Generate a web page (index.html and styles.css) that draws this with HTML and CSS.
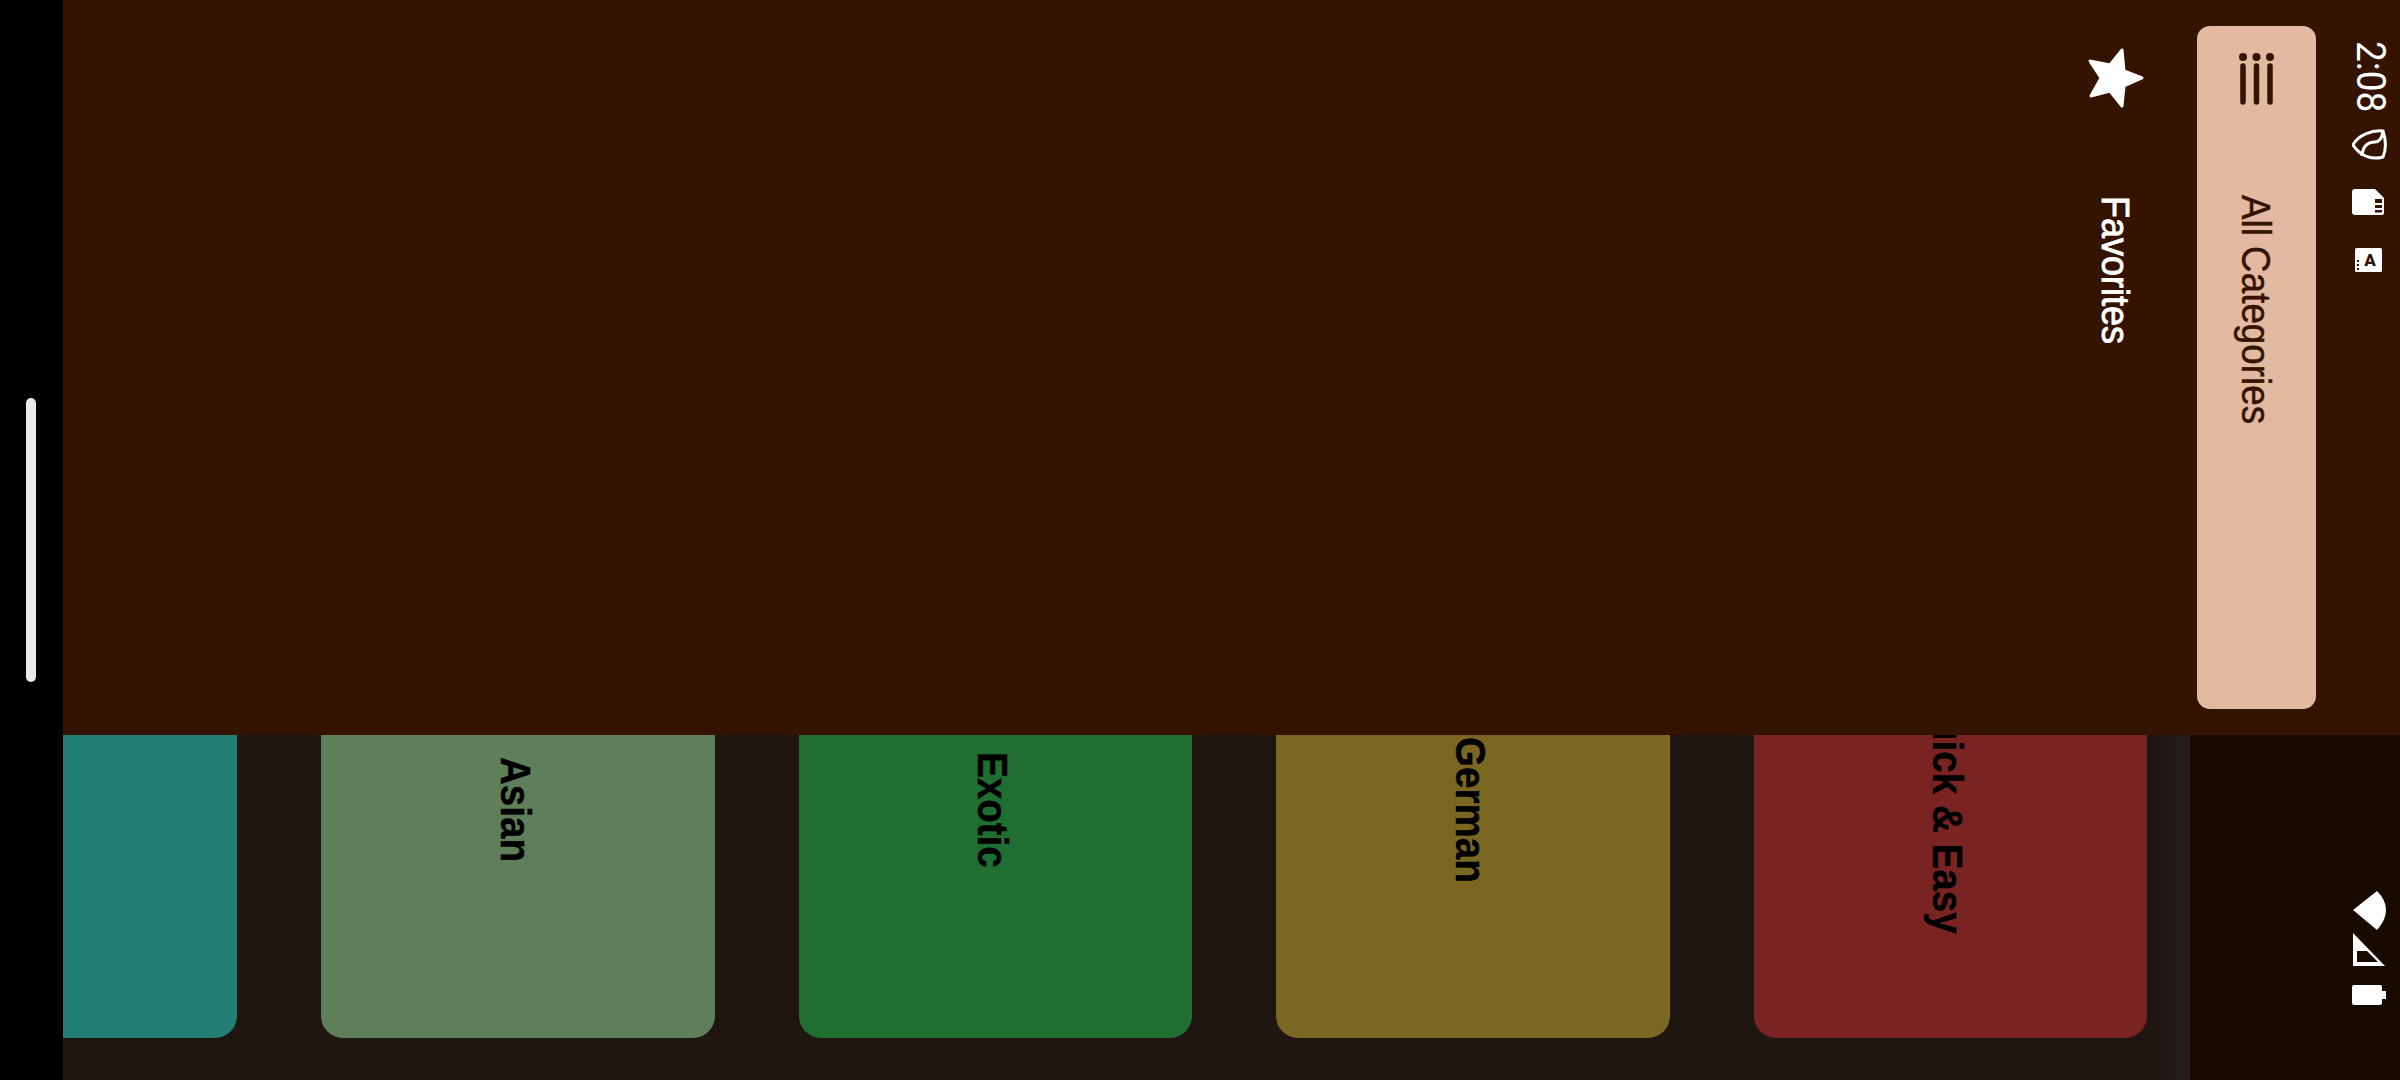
FILE: index.html
```html
<!DOCTYPE html>
<html lang="en">
<head>
<meta charset="utf-8">
<title>Categories</title>
<link rel="stylesheet" href="styles.css">
</head>
<body>
<div class="screen">
  <aside class="gesture"><div class="handle"></div></aside>
  <main class="content">
    <section class="top">
      <div class="tab">
        <svg class="tab-icon" width="64" height="66" viewBox="2084 45 64 66"><path class="star" d="M2122 50 L2124 71 L2142 78 L2124 86 L2122 106 L2110 91 L2091 96 L2101 78 L2090 61 L2110 65 Z"/></svg>
        <span class="tab-label fav">Favorites</span>
      </div>
      <div class="tab active">
        <svg class="tab-icon" width="64" height="66" viewBox="2225 45 64 66"><g class="menu-dots"><circle cx="2243" cy="57" r="4"/><circle cx="2256.5" cy="57" r="4"/><circle cx="2270" cy="57" r="4"/></g><g class="menu-bars"><path d="M2243 66V102M2256.5 66V102M2270 66V102"/></g></svg>
        <span class="tab-label cat">All Categories</span>
      </div>
      <div class="status-top">
        <span class="time">2:08</span>
        <svg class="ic-leaf" width="36" height="32" viewBox="2352 128 36 32"><path class="leaf" d="M2353 144C2358 134 2372 129 2383 130C2386 139 2386 149 2383 156C2373 159 2361 156 2353 144Z"/><path class="leaf" d="M2362 155C2363 143 2370 141 2375 141C2380 141 2382 137 2383 130"/></svg>
        <svg class="ic-sd" width="36" height="28" viewBox="2352 188 36 28"><path class="white" d="M2355 189H2375L2384 198V213Q2384 215 2382 215H2355Q2352 215 2352 212V192Q2352 189 2355 189Z"/><path class="hole" d="M2375 199H2382V203H2375ZM2375 205H2382V208H2375ZM2375 210H2382V212.500H2375Z"/></svg>
        <svg class="ic-a" width="36" height="28" viewBox="2352 246 36 28"><rect class="white" x="2355" y="248" width="27" height="24" rx="1.500"/><text class="a-letter" x="2370" y="266" text-anchor="middle">A</text><path class="hole" d="M2357 260h2v2h-2zM2357 264h2v2h-2zM2357 268h2v2h-2z"/></svg>
      </div>
    </section>
    <section class="bottom">
      <div class="band">
        <div class="cards">
          <div class="card teal"></div>
          <div class="card sage"><span>Asian</span></div>
          <div class="card green"><span>Exotic</span></div>
          <div class="card olive"><span>German</span></div>
          <div class="card red"><span>Quick &amp; Easy</span></div>
        </div>
      </div>
      <div class="panel">
        <svg width="36" height="40" viewBox="2352 891 36 40"><path class="white" d="M2353 910L2377 891Q2386 900 2386 910Q2386 920 2377 930Z"/></svg>
        <svg class="ic-signal" width="36" height="33" viewBox="2352 933 36 33"><path class="white" d="M2353 933L2385 966H2353Z"/><path class="hole" d="M2357 951H2367L2378 962H2357Z"/></svg>
        <svg class="ic-battery" width="36" height="20" viewBox="2352 985 36 20"><path class="white" d="M2354 985H2380Q2382 985 2382 987V991H2386V999H2382V1003Q2382 1005 2380 1005H2354Q2352 1005 2352 1003V987Q2352 985 2354 985Z"/></svg>
      </div>
    </section>
  </main>
</div>
</body>
</html>
```
FILE: styles.css
```css
* { box-sizing: border-box; }
html, body { margin: 0; padding: 0; }
body { width: 2400px; height: 1080px; overflow: hidden; background: #000; font-family: Roboto, "Liberation Sans", sans-serif; }
.screen { display: flex; width: 2400px; height: 1080px; }
.gesture { flex: 0 0 63px; display: flex; align-items: center; justify-content: center; padding-right: 1px; background: #000; }
.handle { width: 10px; height: 284px; border-radius: 5px; background: #ebebeb; }
.content { flex: 1; display: flex; flex-direction: column; min-width: 0; }

.top { height: 735px; background: #341300; display: flex; justify-content: flex-end; align-items: flex-start; padding-top: 26px; }
.tab { width: 119px; height: 683px; margin-right: 22px; border-radius: 13px; display: flex; flex-direction: column; align-items: center; padding-top: 19px; color: #fff; }
.tab.active { background: #e3b9a1; color: #341300; margin-right: 0; }
.tab-icon { flex: none; }
.tab-label { writing-mode: vertical-rl; font-family: "Liberation Sans", Arial, sans-serif; line-height: 44px; transform: scaleX(1.1); }
.cat { font-size: 36.800px; margin-top: 84px; margin-right: 4px; -webkit-text-stroke: 0.4px #341300; }
.fav { font-size: 36px; margin-top: 85px; margin-right: 2px; -webkit-text-stroke: 0.8px #fff; }
.star { fill: #fff; stroke: #fff; stroke-width: 3; stroke-linejoin: round; }
.menu-dots circle { fill: #341300; }
.menu-bars path { fill: none; stroke: #341300; stroke-width: 5.500; stroke-linecap: round; }

.status-top { width: 84px; padding: 41px 0 0 36px; display: flex; flex-direction: column; align-items: flex-start; margin-top: -26px; color: #fff; }
.time { writing-mode: vertical-rl; font-size: 37px; line-height: 36px; font-weight: 400; transform: scaleX(1.1); }
.ic-leaf { margin-top: 17px; }
.ic-sd { margin-top: 27px; }
.ic-a { margin-top: 30px; }
.leaf { fill: none; stroke: #fff; stroke-width: 3; }
.white { fill: #fff; }
.hole { fill: #341300; }
.a-letter { font: 900 17px Roboto, sans-serif; fill: #341300; }

.bottom { height: 345px; display: flex; }
.band { flex: 1; min-width: 0; overflow: hidden; background: linear-gradient(90deg, #1f1611 0, #1f1611 98.500%, #25201d 100%); display: flex; align-items: flex-end; padding-bottom: 42px; }
.cards { display: flex; gap: 84px; margin-left: -219.500px; align-items: flex-end; }
.card { flex: 0 0 393.500px; height: 456px; border-radius: 22px; display: flex; align-items: center; justify-content: center; padding-right: 4px; color: #000; }
.card span { writing-mode: vertical-rl; font-family: "Liberation Sans", Arial, sans-serif; font-size: 38.600px; line-height: 48px; font-weight: 700; white-space: nowrap; transform: scaleX(1.12); -webkit-text-stroke: 0.4px #000; }
.teal { background: #237e73; }
.sage { background: #5e7f59; }
.green { background: #206e31; }
.olive { background: #7a6722; }
.red { background: #7a2323; }

.panel { flex: 0 0 210px; background: #190a00; display: flex; flex-direction: column; align-items: flex-start; padding: 156px 0 0 162px; }
.panel .hole { fill: #190a00; }
.ic-signal { margin-top: 2px; }
.ic-battery { margin-top: 19px; }
```
